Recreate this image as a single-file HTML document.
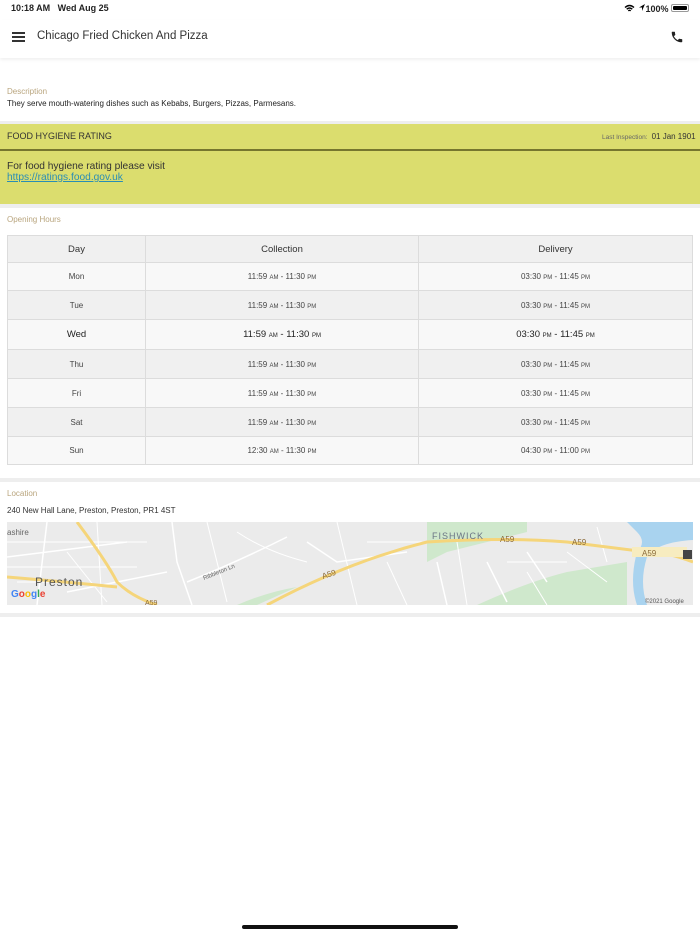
<!DOCTYPE html>
<html><head><meta charset="utf-8"><style>
*{margin:0;padding:0;box-sizing:border-box}
body{width:700px;height:934px;background:#fff;font-family:"Liberation Sans",sans-serif;color:#222;position:relative;overflow:hidden}
.abs{position:absolute}
.lbl{color:#b9a57e;font-size:8px}
table{border-collapse:collapse;position:absolute;left:7px;top:235px;width:686px;font-size:8px;color:#444}
td{border:1px solid #dcdcdc;text-align:center}
.sm{font-size:6px}
</style></head><body>
<div class="abs" style="left:11px;top:3px;font-size:9px;font-weight:bold">10:18 AM&nbsp;&nbsp;&nbsp;Wed Aug 25</div>
<div class="abs" style="left:624px;top:3px;font-size:9px;font-weight:bold">
<svg width="11" height="9" viewBox="0 0 11 9" style="vertical-align:-1px"><path d="M1 3.5Q5.5 -0.5 10 3.5M2.7 5.2Q5.5 2.8 8.3 5.2M4.3 6.8Q5.5 5.8 6.7 6.8" stroke="#000" stroke-width="1.4" fill="none"/></svg>
<svg width="8" height="9" viewBox="0 0 8 9"><path d="M7 1L1 4.5H4V8Z" fill="#000"/></svg>100%</div>
<div class="abs" style="left:671px;top:4px;width:18px;height:8px;border:1px solid #999;border-radius:2px;padding:1px"><div style="background:#000;width:100%;height:100%;border-radius:1px"></div></div>
<div class="abs" style="left:0;top:20px;width:700px;height:38px;box-shadow:0 2px 3px rgba(0,0,0,.06)"></div>
<div class="abs" style="left:12px;top:32px;width:13px;height:1.5px;background:#333;box-shadow:0 4px 0 #333,0 8px 0 #333"></div>
<div class="abs" style="left:37px;top:30px;font-size:11.5px;color:#333">Chicago Fried Chicken And Pizza</div>
<svg class="abs" style="left:670px;top:30px" width="14" height="14" viewBox="0 0 24 24"><path d="M6.6 10.8c1.4 2.8 3.8 5.1 6.6 6.6l2.2-2.2c.3-.3.7-.4 1-.2 1.1.4 2.300.6 3.6.6.6 0 1 .4 1 1V20c0 .6-.4 1-1 1C10.6 21 3 13.4 3 4c0-.6.4-1 1-1h3.5c.6 0 1 .4 1 1 0 1.3.2 2.5.6 3.6.1.3 0 .7-.2 1z" fill="#222"/></svg>
<div class="abs lbl" style="left:7px;top:87px">Description</div>
<div class="abs" style="left:7px;top:99px;font-size:8px">They serve mouth-watering dishes such as Kebabs, Burgers, Pizzas, Parmesans.</div>
<div class="abs" style="left:0;top:121px;width:700px;height:3px;background:#eee"></div>
<div class="abs" style="left:0;top:124px;width:700px;height:80px;background:#dbdd6e"></div>
<div class="abs" style="left:0;top:149px;width:700px;height:1.5px;background:#76762e"></div>
<div class="abs" style="left:7px;top:131px;font-size:9px;color:#333">FOOD HYGIENE RATING</div>
<div class="abs" style="left:602px;top:132px;font-size:6.5px;color:#666">Last Inspection: <span style="font-size:8px;color:#333">&nbsp;01 Jan 1901</span></div>
<div class="abs" style="left:7px;top:161px;font-size:10.2px;color:#333">For food hygiene rating please visit<br><span style="color:#2a8db5;text-decoration:underline">https://ratings.food.gov.uk</span></div>
<div class="abs" style="left:0;top:204px;width:700px;height:4px;background:#eee"></div>
<div class="abs lbl" style="left:7px;top:215px">Opening Hours</div>
<table>
<tr style="height:27px;background:#f0f0f0;font-size:9.5px;color:#333"><td style="width:138px">Day</td><td style="width:273px">Collection</td><td>Delivery</td></tr>
<tr style="height:28px;background:#f8f8f8"><td>Mon</td><td>11:59 <span class="sm">AM</span> - 11:30 <span class="sm">PM</span></td><td>03:30 <span class="sm">PM</span> - 11:45 <span class="sm">PM</span></td></tr>
<tr style="height:29px;background:#f0f0f0"><td>Tue</td><td>11:59 <span class="sm">AM</span> - 11:30 <span class="sm">PM</span></td><td>03:30 <span class="sm">PM</span> - 11:45 <span class="sm">PM</span></td></tr>
<tr style="height:30px;background:#f8f8f8;font-size:9.5px;color:#222"><td>Wed</td><td>11:59 <span class="sm">AM</span> - 11:30 <span class="sm">PM</span></td><td>03:30 <span class="sm">PM</span> - 11:45 <span class="sm">PM</span></td></tr>
<tr style="height:29px;background:#f0f0f0"><td>Thu</td><td>11:59 <span class="sm">AM</span> - 11:30 <span class="sm">PM</span></td><td>03:30 <span class="sm">PM</span> - 11:45 <span class="sm">PM</span></td></tr>
<tr style="height:29px;background:#f8f8f8"><td>Fri</td><td>11:59 <span class="sm">AM</span> - 11:30 <span class="sm">PM</span></td><td>03:30 <span class="sm">PM</span> - 11:45 <span class="sm">PM</span></td></tr>
<tr style="height:29px;background:#f0f0f0"><td>Sat</td><td>11:59 <span class="sm">AM</span> - 11:30 <span class="sm">PM</span></td><td>03:30 <span class="sm">PM</span> - 11:45 <span class="sm">PM</span></td></tr>
<tr style="height:28px;background:#f8f8f8"><td>Sun</td><td>12:30 <span class="sm">AM</span> - 11:30 <span class="sm">PM</span></td><td>04:30 <span class="sm">PM</span> - 11:00 <span class="sm">PM</span></td></tr>
</table>
<div class="abs" style="left:0;top:478px;width:700px;height:4px;background:#eee"></div>
<div class="abs lbl" style="left:7px;top:489px">Location</div>
<div class="abs" style="left:7px;top:506px;font-size:8px;color:#333">240 New Hall Lane, Preston, Preston, PR1 4ST</div>
<svg class="abs" style="left:7px;top:522px" width="686" height="83" viewBox="0 0 686 83">
<rect width="686" height="83" fill="#ebebeb"/>
<path d="M420 0H520V10Q480 20 440 30L420 40Z" fill="#cfe8cc"/>
<path d="M470 83Q520 60 560 50L620 40V83Z" fill="#cfe8cc"/>
<path d="M230 83Q260 70 290 65L250 83Z" fill="#cfe8cc"/>
<path d="M680 0H620L630 10Q640 20 630 30Q622 60 630 83H640Q632 60 640 35Q650 20 686 18V0Z" fill="#a9d3ef"/>
<g stroke="#fff" stroke-width="1" fill="none">
<path d="M0 20H140M0 45H130M60 30L100 80M200 0L220 80M230 10Q260 30 300 40M330 0L350 83M360 20H420M380 40L400 83M450 20L460 83M500 40H560M520 50L540 83M560 30L600 60M590 5L600 40M90 0L95 83M10 60H70"/>
</g>
<g stroke="#fff" stroke-width="1.5" fill="none">
<path d="M165 0L170 40L185 83M180 60Q230 40 280 15M40 0L30 83M0 35L120 20M60 70L160 50M430 40L440 83M480 40L500 80M300 20L330 40L400 30M520 30L540 60"/>
</g>
<g stroke="#f5d57a" stroke-width="3" fill="none">
<path d="M70 0Q100 40 110 60Q125 75 150 83M0 55Q60 60 110 65M260 83Q340 40 420 20Q500 15 560 20Q600 25 640 30Q660 30 686 40"/>
</g>
<path d="M625 25H680V35H625Z" fill="#f7ecc0"/>
<g font-family="Liberation Sans" font-size="8" fill="#8a6a3a">
<text x="316" y="57" transform="rotate(-18 316 57)">A59</text>
<text x="493" y="20">A59</text><text x="565" y="23">A59</text><text x="635" y="34">A59</text>
<text x="138" y="83" font-size="7">A59</text>
</g>
<text x="425" y="17" font-family="Liberation Sans" font-size="9" fill="#6b7585" letter-spacing="1">FISHWICK</text>
<text x="28" y="64" font-family="Liberation Sans" font-size="12" fill="#555" letter-spacing="1">Preston</text>
<text x="0" y="13" font-family="Liberation Sans" font-size="8" fill="#666">ashire</text>
<text x="197" y="58" transform="rotate(-22 197 58)" font-family="Liberation Sans" font-size="6" fill="#666">Ribbleton Ln</text>
<text x="4" y="75" font-family="Liberation Sans" font-size="10" font-weight="bold"><tspan fill="#4285f4">G</tspan><tspan fill="#ea4335">o</tspan><tspan fill="#fbbc05">o</tspan><tspan fill="#4285f4">g</tspan><tspan fill="#34a853">l</tspan><tspan fill="#ea4335">e</tspan></text>
<text x="638" y="81" font-family="Liberation Sans" font-size="6" fill="#555">©2021 Google</text>
<rect x="676" y="28" width="9" height="9" fill="#444"/>
</svg>
<div class="abs" style="left:0;top:613px;width:700px;height:4px;background:#eee"></div>
<div class="abs" style="left:242px;top:925px;width:216px;height:4px;border-radius:2px;background:#111"></div>
</body></html>
